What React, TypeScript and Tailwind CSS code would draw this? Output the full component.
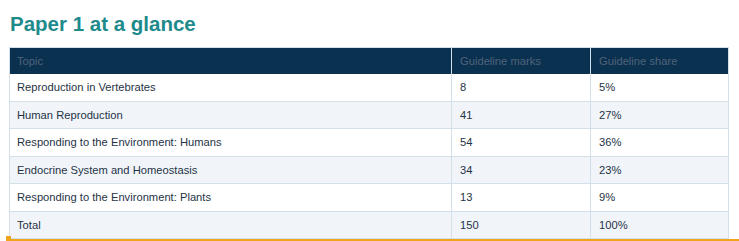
import React from "react";

const rows = [
  ["Reproduction in Vertebrates", "8", "5%"],
  ["Human Reproduction", "41", "27%"],
  ["Responding to the Environment: Humans", "54", "36%"],
  ["Endocrine System and Homeostasis", "34", "23%"],
  ["Responding to the Environment: Plants", "13", "9%"],
  ["Total", "150", "100%"],
];

export default function App() {
  return (
    <div
      className="relative w-[739px] h-[241px] bg-white overflow-hidden"
      style={{ fontFamily: '"Liberation Sans", Arial, sans-serif' }}
    >
      <div className="pl-[9px] pt-[11px]">
        <h1 className="pl-[1px] text-[20.5px] leading-[25px] font-bold text-[#1d8a8c]">Paper 1 at a glance</h1>
        <div className="mt-[11px] w-[720px] border-x border-t border-[#d3dfe9] text-[11.2px]">
          <div className="flex h-[26px] items-center bg-[#0b3150] text-[#4f6379]">
            <div className="w-[441px] pl-[7px]">Topic</div>
            <div className="w-[139px] pl-[8px] border-l border-[#d3dfe9] h-full flex items-center">Guideline marks</div>
            <div className="flex-1 pl-[8px] border-l border-[#d3dfe9] h-full flex items-center">Guideline share</div>
          </div>
          {rows.map((r, i) => (
            <div
              key={i}
              className={`flex h-[27.5px] items-center border-b border-[#d3dfe9] text-[#1f3346] ${
                i % 2 === 1 ? "bg-[#f1f5f9]" : "bg-white"
              }`}
            >
              <div className="w-[441px] pl-[7px] pt-[1px]">{r[0]}</div>
              <div className="w-[139px] pl-[8px] pt-[1px] border-l border-[#d3dfe9] h-full flex items-center">{r[1]}</div>
              <div className="flex-1 pl-[8px] pt-[1px] border-l border-[#d3dfe9] h-full flex items-center">{r[2]}</div>
            </div>
          ))}
        </div>
      </div>
      <div className="absolute left-[6px] right-0 top-[239px] h-[2px] bg-[#f0a41c]" />
      <div className="absolute left-[6px] top-[236px] w-[5px] h-[4px] bg-[#f0a41c]" />
    </div>
  );
}
